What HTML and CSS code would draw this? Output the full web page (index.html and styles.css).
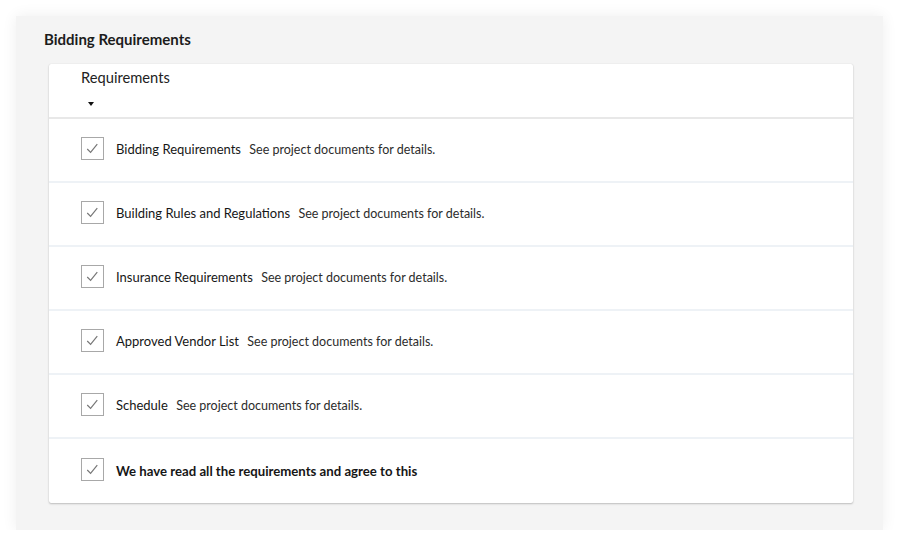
FILE: index.html
```html
<!DOCTYPE html>
<html lang="en">
<head>
  <meta charset="UTF-8" />
  <title>Bidding Requirements</title>
  <link rel="stylesheet" href="styles.css">
</head>
<body>
  <div class="panel">
    <h2 class="panel-title">Bidding Requirements</h2>

    <div class="card">
      <div class="card-head">
        <div class="head-label">Requirements</div>
        <span class="caret"></span>
      </div>

      <div class="row">
        <span class="check"><svg viewBox="0 0 22 22"><path d="M5.5 11.5 L9 15 L16 6.5"/></svg></span>
        <p class="text"><span class="label">Bidding Requirements</span> <span class="desc">See project documents for details.</span></p>
      </div>
      <div class="row">
        <span class="check"><svg viewBox="0 0 22 22"><path d="M5.5 11.5 L9 15 L16 6.5"/></svg></span>
        <p class="text"><span class="label">Building Rules and Regulations</span> <span class="desc">See project documents for details.</span></p>
      </div>
      <div class="row">
        <span class="check"><svg viewBox="0 0 22 22"><path d="M5.5 11.5 L9 15 L16 6.5"/></svg></span>
        <p class="text"><span class="label">Insurance Requirements</span> <span class="desc">See project documents for details.</span></p>
      </div>
      <div class="row">
        <span class="check"><svg viewBox="0 0 22 22"><path d="M5.5 11.5 L9 15 L16 6.5"/></svg></span>
        <p class="text"><span class="label">Approved Vendor List</span> <span class="desc">See project documents for details.</span></p>
      </div>
      <div class="row">
        <span class="check"><svg viewBox="0 0 22 22"><path d="M5.5 11.5 L9 15 L16 6.5"/></svg></span>
        <p class="text"><span class="label">Schedule</span> <span class="desc">See project documents for details.</span></p>
      </div>
      <div class="row agree">
        <span class="check"><svg viewBox="0 0 22 22"><path d="M5.5 11.5 L9 15 L16 6.5"/></svg></span>
        <p class="text"><span class="label">We have read all the requirements and agree to this</span></p>
      </div>
    </div>
  </div>
</body>
</html>
```

FILE: styles.css
```css
* {
  box-sizing: border-box;
  margin: 0;
  padding: 0;
}

body {
  background: #fff;
  font-family: Lato, "Open Sans", Arial, sans-serif;
  color: #222;
}

.panel {
  margin: 16px 0 0 16px;
  width: 867px;
  height: 514px;
  background: #f4f4f4;
  box-shadow: 0 0 14px rgba(0, 0, 0, 0.07);
  padding: 14px 30px 0 33px;
}

.panel-title {
  font-size: 15px;
  font-weight: 700;
  color: #1c1c1c;
  line-height: 19px;
  margin-left: -5px;
  margin-bottom: 15px;
}

.card {
  background: #fff;
  border-radius: 2px;
  box-shadow: 0 1px 2px rgba(0, 0, 0, 0.22), 0 0 1px rgba(0, 0, 0, 0.15);
}

.card-head {
  height: 55px;
  padding: 4px 0 0 32px;
  border-bottom: 2px solid #e8e8e8;
}

.head-label {
  font-size: 14.7px;
  line-height: 18px;
  color: #222;
}

.caret {
  display: block;
  width: 0;
  height: 0;
  margin: 16px 0 0 7px;
  border-left: 3.5px solid transparent;
  border-right: 3.5px solid transparent;
  border-top: 4px solid #111;
}

.row {
  display: flex;
  align-items: center;
  height: 64px;
  padding: 0 32px 3px;
  border-bottom: 2px solid #eef2f6;
}

.row:last-child {
  border-bottom: none;
}

.check {
  width: 23px;
  height: 23px;
  border: 1px solid #a8a8a8;
  background: #fff;
  margin-right: 12px;
  flex-shrink: 0;
}

.check svg {
  display: block;
  width: 21px;
  height: 21px;
  fill: none;
  stroke: #777;
  stroke-width: 1.25;
}

.text {
  font-size: 13px;
  line-height: 18px;
  margin-top: 2px;
}

.label {
  color: #161616;
  margin-right: 5px;
}

.desc {
  font-size: 12.5px;
  color: #2c2c2c;
}

.agree .label {
  font-size: 13.2px;
  font-weight: 700;
}
```
